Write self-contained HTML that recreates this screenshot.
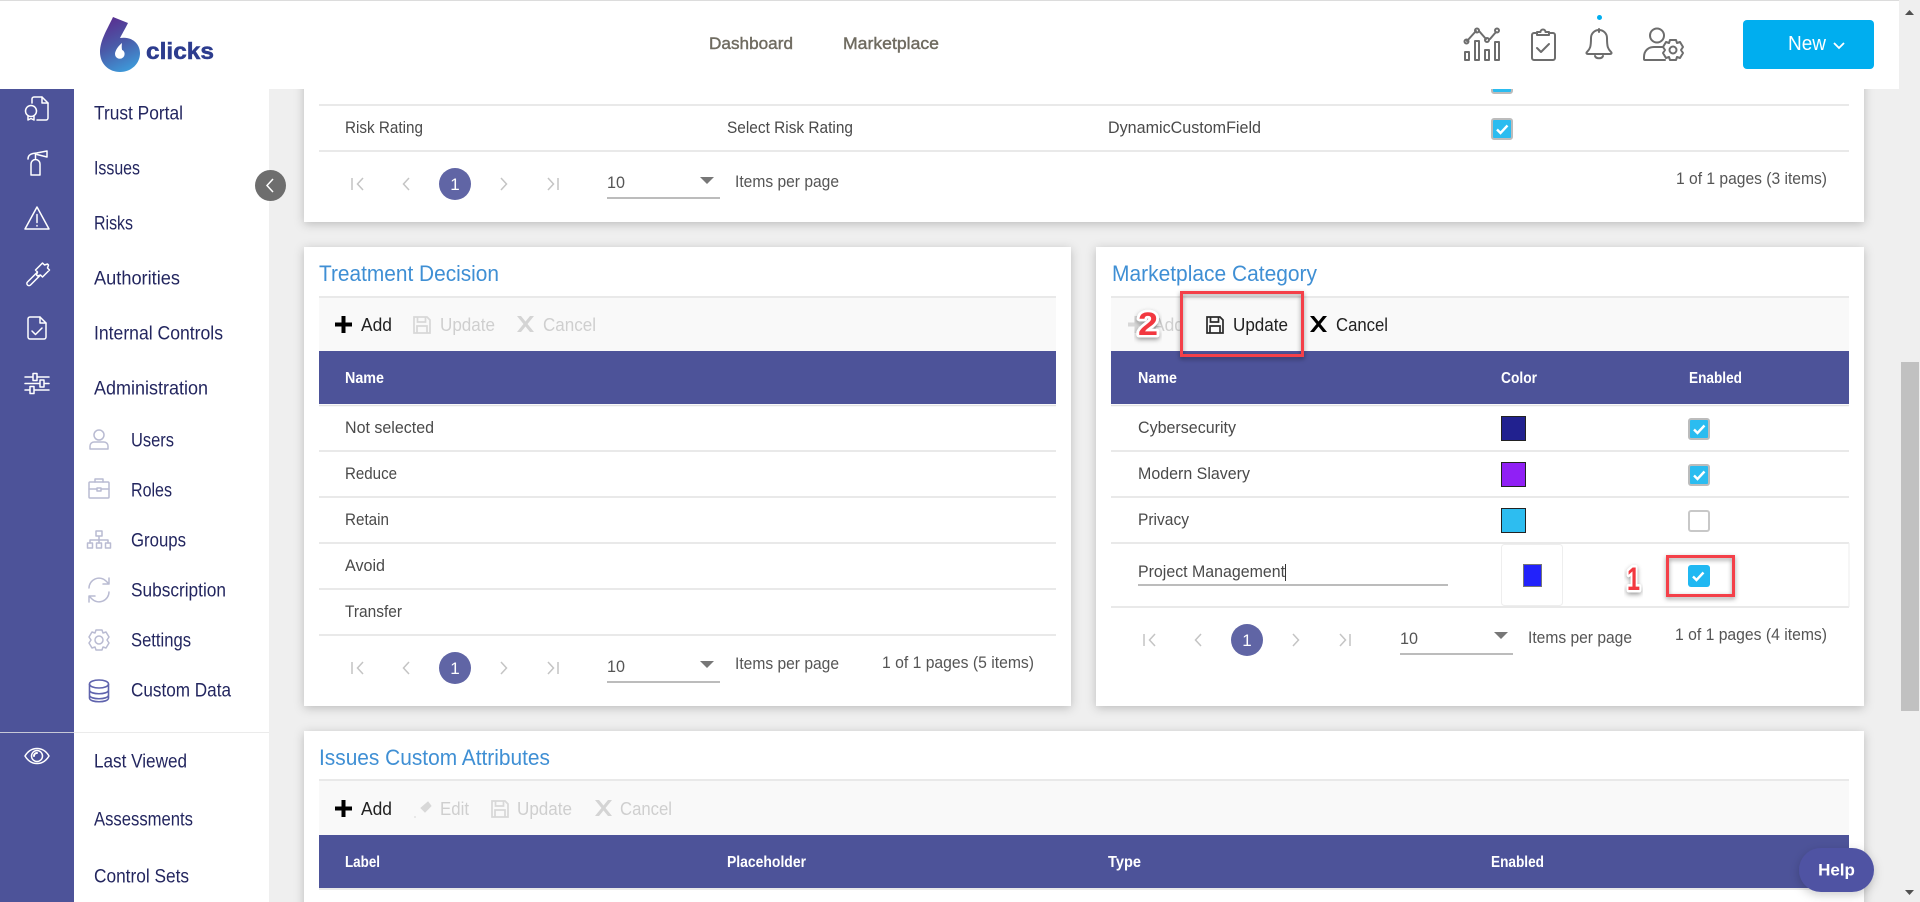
<!DOCTYPE html>
<html lang="en">
<head>
<meta charset="utf-8">
<title>6clicks</title>
<style>
html,body{margin:0;padding:0;width:1920px;height:902px;overflow:hidden;background:#efefef}
svg{display:block;font-family:"Liberation Sans",sans-serif}
.s{font-size:19px;fill:#23265f}
.r{font-size:16.5px;fill:#4a4a4a}
.t{font-size:22px;fill:#3f8fd4}
.b{font-size:18px;fill:#222}
.d{font-size:18px;fill:#cfcfcf}
.h{font-size:15.5px;font-weight:bold;fill:#fff}
.p{font-size:16.5px;fill:#555}
.w{fill:none;stroke:#fff;stroke-width:1.5;stroke-linecap:round;stroke-linejoin:round}
.g{fill:none;stroke:#b9bbd2;stroke-width:1.5;stroke-linecap:round;stroke-linejoin:round}
.k{fill:none;stroke:#6d6d6d;stroke-width:2;stroke-linecap:round;stroke-linejoin:round}
.n{fill:none;stroke:#c4c4c4;stroke-width:1.5}
.l{stroke:#e2e2e2;stroke-width:1.5}
.nm{font-size:32px;fill:#f2393f;stroke:#fff;stroke-width:5px;paint-order:stroke;stroke-linejoin:round}
</style>
</head>
<body>
<svg width="1920" height="902" viewBox="0 0 1920 902" xmlns="http://www.w3.org/2000/svg">
<defs>
<filter id="sh" x="-5%" y="-10%" width="110%" height="120%"><feDropShadow dx="0" dy="2" stdDeviation="5" flood-color="#000" flood-opacity=".22"/></filter>
<filter id="sh2" x="-20%" y="-20%" width="140%" height="140%"><feDropShadow dx="0" dy="2" stdDeviation="2.5" flood-color="#000" flood-opacity=".4"/></filter>
<filter id="sh3" x="-30%" y="-30%" width="160%" height="170%"><feDropShadow dx="0" dy="3" stdDeviation="5" flood-color="#000" flood-opacity=".2"/></filter>
<linearGradient id="lg" x1=".25" y1="0" x2=".6" y2="1"><stop offset="0" stop-color="#5a2d8f"/><stop offset=".5" stop-color="#4a5aa8"/><stop offset="1" stop-color="#3e98d8"/></linearGradient>
<g id="pg">
<path d="M-103-6v12M-92-6l-5.500 6 5.500 6" class="n"/>
<path d="M-46-6l-5.500 6 5.500 6" class="n"/>
<circle cx="0" cy="0" r="16" fill="#6065a5"/>
<path d="M46-6l5.500 6-5.500 6" class="n"/>
<path d="M103-6v12M93-6l5.500 6-5.500 6" class="n"/>
</g>
<g id="ck"><rect x="1" y="1" width="20" height="20" rx="2" fill="#2bbcf0" stroke="#bcbcbc" stroke-width="2"/><path d="M6 11.500l3.500 3.500 7-7.500" fill="none" stroke="#fff" stroke-width="2.400"/></g>
<path id="plus" d="M6.500 0h4v6.500H17v4h-6.500V17h-4v-6.500H0v-4h6.500z"/>
<path id="ex" d="M0 0h4l4.500 5.500L13 0h4l-6.500 8 6.500 8h-4l-4.500-5.500L4 16H0l6.500-8z"/>
<g id="sv" fill="none" stroke-width="1.700"><path d="M1 1h13l3 3v13H1zM4.500 1v5h8V1M4 17v-7h10v7"/></g>
</defs>

<rect width="1920" height="902" fill="#efefef"/>

<!-- cards -->
<rect x="304" y="60" width="1560" height="162" fill="#fff" filter="url(#sh)"/>
<rect x="304" y="247" width="767" height="459" fill="#fff" filter="url(#sh)"/>
<rect x="1096" y="247" width="768" height="459" fill="#fff" filter="url(#sh)"/>
<rect x="304" y="731" width="1560" height="190" fill="#fff" filter="url(#sh)"/>

<!-- top card -->
<line x1="319" x2="1849" y1="105" y2="105" class="l"/>
<line x1="319" x2="1849" y1="151" y2="151" class="l"/>
<text class="r" x="345" y="133" textLength="78" lengthAdjust="spacingAndGlyphs">Risk Rating</text>
<text class="r" x="727" y="133" textLength="126" lengthAdjust="spacingAndGlyphs">Select Risk Rating</text>
<text class="r" x="1108" y="133" textLength="153" lengthAdjust="spacingAndGlyphs">DynamicCustomField</text>
<use href="#ck" x="1491" y="72"/>
<use href="#ck" x="1491" y="118"/>
<use href="#pg" x="455" y="184"/>
<text x="455" y="190" text-anchor="middle" font-size="17" fill="#fff">1</text>
<text class="p" x="607" y="188" textLength="18" lengthAdjust="spacingAndGlyphs">10</text>
<line x1="607" x2="720" y1="198" y2="198" stroke="#a5a5a5" stroke-width="1.500"/>
<path d="M700 177h14l-7 7z" fill="#777"/>
<text class="p" x="735" y="187" textLength="104" lengthAdjust="spacingAndGlyphs">Items per page</text>
<text class="p" x="1676" y="184" textLength="151" lengthAdjust="spacingAndGlyphs">1 of 1 pages (3 items)</text>

<!-- Treatment Decision -->
<text class="t" x="319" y="281" textLength="180" lengthAdjust="spacingAndGlyphs">Treatment Decision</text>
<line x1="319" x2="1056" y1="297" y2="297" class="l"/>
<rect x="319" y="298" width="737" height="53" fill="#f9f9f9"/>
<rect x="319" y="351" width="737" height="53" fill="#4d5399"/>
<line x1="319" x2="1056" y1="405.500" y2="405.500" class="l"/>
<use href="#plus" x="335" y="316" fill="#000"/>
<text class="b" x="361" y="331" textLength="31" lengthAdjust="spacingAndGlyphs">Add</text>
<use href="#sv" x="413" y="316" stroke="#d8d8d8"/>
<text class="d" x="440" y="331" textLength="55" lengthAdjust="spacingAndGlyphs">Update</text>
<use href="#ex" x="517" y="316" fill="#d4d4d4"/>
<text class="d" x="543" y="331" textLength="53" lengthAdjust="spacingAndGlyphs">Cancel</text>
<text class="h" x="345" y="383" textLength="39" lengthAdjust="spacingAndGlyphs">Name</text>
<line x1="319" x2="1056" y1="451" y2="451" class="l"/>
<line x1="319" x2="1056" y1="497" y2="497" class="l"/>
<line x1="319" x2="1056" y1="543" y2="543" class="l"/>
<line x1="319" x2="1056" y1="589" y2="589" class="l"/>
<line x1="319" x2="1056" y1="635" y2="635" class="l"/>
<text class="r" x="345" y="433" textLength="89" lengthAdjust="spacingAndGlyphs">Not selected</text>
<text class="r" x="345" y="479" textLength="52" lengthAdjust="spacingAndGlyphs">Reduce</text>
<text class="r" x="345" y="525" textLength="44" lengthAdjust="spacingAndGlyphs">Retain</text>
<text class="r" x="345" y="571" textLength="40" lengthAdjust="spacingAndGlyphs">Avoid</text>
<text class="r" x="345" y="617" textLength="57" lengthAdjust="spacingAndGlyphs">Transfer</text>
<use href="#pg" x="455" y="668"/>
<text x="455" y="674" text-anchor="middle" font-size="17" fill="#fff">1</text>
<text class="p" x="607" y="672" textLength="18" lengthAdjust="spacingAndGlyphs">10</text>
<line x1="607" x2="720" y1="682" y2="682" stroke="#a5a5a5" stroke-width="1.500"/>
<path d="M700 661h14l-7 7z" fill="#777"/>
<text class="p" x="735" y="669" textLength="104" lengthAdjust="spacingAndGlyphs">Items per page</text>
<text class="p" x="882" y="668" textLength="152" lengthAdjust="spacingAndGlyphs">1 of 1 pages (5 items)</text>

<!-- Marketplace Category -->
<text class="t" x="1112" y="281" textLength="205" lengthAdjust="spacingAndGlyphs">Marketplace Category</text>
<line x1="1111" x2="1849" y1="297" y2="297" class="l"/>
<rect x="1111" y="298" width="738" height="53" fill="#f9f9f9"/>
<rect x="1111" y="351" width="738" height="53" fill="#4d5399"/>
<line x1="1111" x2="1849" y1="405.500" y2="405.500" class="l"/>
<use href="#plus" x="1128" y="316" fill="#d8d8d8"/>
<text class="d" x="1153" y="331" textLength="31" lengthAdjust="spacingAndGlyphs">Add</text>
<g transform="translate(1206 316)"><use href="#sv" stroke="#2a2a2a"/></g>
<text class="b" x="1233" y="331" textLength="55" lengthAdjust="spacingAndGlyphs">Update</text>
<use href="#ex" x="1310" y="316" fill="#000"/>
<text class="b" x="1336" y="331" textLength="52" lengthAdjust="spacingAndGlyphs">Cancel</text>
<text class="h" x="1138" y="383" textLength="39" lengthAdjust="spacingAndGlyphs">Name</text>
<text class="h" x="1501" y="383" textLength="36" lengthAdjust="spacingAndGlyphs">Color</text>
<text class="h" x="1689" y="383" textLength="53" lengthAdjust="spacingAndGlyphs">Enabled</text>
<line x1="1111" x2="1849" y1="451" y2="451" class="l"/>
<line x1="1111" x2="1849" y1="497" y2="497" class="l"/>
<line x1="1111" x2="1849" y1="543" y2="543" class="l"/>
<line x1="1111" x2="1849" y1="607" y2="607" class="l"/>
<line x1="1849" x2="1849" y1="543" y2="607" stroke="#eee"/>
<text class="r" x="1138" y="433" textLength="98" lengthAdjust="spacingAndGlyphs">Cybersecurity</text>
<text class="r" x="1138" y="479" textLength="112" lengthAdjust="spacingAndGlyphs">Modern Slavery</text>
<text class="r" x="1138" y="525" textLength="51" lengthAdjust="spacingAndGlyphs">Privacy</text>
<rect x="1501.500" y="416.500" width="24" height="24" fill="#21218f" stroke="#222"/>
<rect x="1501.500" y="462.500" width="24" height="24" fill="#9020f5" stroke="#222"/>
<rect x="1501.500" y="508.500" width="24" height="24" fill="#2dbdf0" stroke="#222"/>
<use href="#ck" x="1688" y="418"/>
<use href="#ck" x="1688" y="464"/>
<rect x="1689" y="511" width="20" height="20" rx="2" fill="#fff" stroke="#c8c8c8" stroke-width="2"/>
<!-- edit row -->
<text class="r" x="1138" y="577" textLength="147" lengthAdjust="spacingAndGlyphs">Project Management</text>
<line x1="1285.500" x2="1285.500" y1="564" y2="581" stroke="#333" stroke-width="1"/>
<line x1="1138" x2="1448" y1="585" y2="585" stroke="#a5a5a5" stroke-width="1.500"/>
<rect x="1501.500" y="544.500" width="61" height="61" rx="3" fill="#fff" stroke="#eee"/>
<rect x="1523.500" y="564.500" width="18" height="22" fill="#2222fb" stroke="#777"/>
<rect x="1688" y="565" width="22" height="22" rx="3" fill="#20b8f2"/>
<path d="M1693 576.500l3.500 3.500 7-7.500" fill="none" stroke="#fff" stroke-width="2.400"/>
<use href="#pg" x="1247" y="640"/>
<text x="1247" y="646" text-anchor="middle" font-size="17" fill="#fff">1</text>
<text class="p" x="1400" y="644" textLength="18" lengthAdjust="spacingAndGlyphs">10</text>
<line x1="1400" x2="1513" y1="654" y2="654" stroke="#a5a5a5" stroke-width="1.500"/>
<path d="M1494 632h14l-7 7z" fill="#777"/>
<text class="p" x="1528" y="643" textLength="104" lengthAdjust="spacingAndGlyphs">Items per page</text>
<text class="p" x="1675" y="640" textLength="152" lengthAdjust="spacingAndGlyphs">1 of 1 pages (4 items)</text>

<!-- annotations -->
<rect x="1181.500" y="292.500" width="121" height="63" fill="none" stroke="#f4404a" stroke-width="3" filter="url(#sh2)"/>
<rect x="1667.500" y="556.500" width="66" height="39" fill="none" stroke="#f4404a" stroke-width="3" filter="url(#sh2)"/>
<text class="nm" x="1138" y="335" textLength="20" lengthAdjust="spacingAndGlyphs" font-weight="bold" filter="url(#sh2)">2</text>
<text class="nm" x="1627" y="590" textLength="13" lengthAdjust="spacingAndGlyphs" font-weight="bold" filter="url(#sh2)">1</text>

<!-- Issues Custom Attributes -->
<text class="t" x="319" y="765" textLength="231" lengthAdjust="spacingAndGlyphs">Issues Custom Attributes</text>
<line x1="319" x2="1849" y1="780" y2="780" class="l"/>
<rect x="319" y="781" width="1530" height="54" fill="#f9f9f9"/>
<rect x="319" y="835" width="1530" height="53" fill="#4d5399"/>
<line x1="319" x2="1849" y1="889" y2="889" class="l"/>
<use href="#plus" x="335" y="800" fill="#000"/>
<text class="b" x="361" y="815" textLength="31" lengthAdjust="spacingAndGlyphs">Add</text>
<path d="M421 808l7-6 3 4-6 6zM414 817h2" fill="#d8d8d8" stroke="#d8d8d8"/>
<text class="d" x="440" y="815" textLength="29" lengthAdjust="spacingAndGlyphs">Edit</text>
<use href="#sv" x="491" y="800" stroke="#d8d8d8"/>
<text class="d" x="517" y="815" textLength="55" lengthAdjust="spacingAndGlyphs">Update</text>
<use href="#ex" x="595" y="800" fill="#d4d4d4"/>
<text class="d" x="620" y="815" textLength="52" lengthAdjust="spacingAndGlyphs">Cancel</text>
<text class="h" x="345" y="867" textLength="35" lengthAdjust="spacingAndGlyphs">Label</text>
<text class="h" x="727" y="867" textLength="79" lengthAdjust="spacingAndGlyphs">Placeholder</text>
<text class="h" x="1108" y="867" textLength="33" lengthAdjust="spacingAndGlyphs">Type</text>
<text class="h" x="1491" y="867" textLength="53" lengthAdjust="spacingAndGlyphs">Enabled</text>

<!-- scrollbar -->
<rect x="1901" y="362" width="18" height="349" fill="#c1c1c1"/>
<path d="M1905 15h9l-4.500-5z" fill="#505050"/>
<path d="M1905 890h9l-4.500 5z" fill="#505050"/>

<!-- help -->
<rect x="1799" y="848" width="75" height="44" rx="22" fill="#4f52a3" filter="url(#sh3)"/>
<text x="1836.500" y="875.500" text-anchor="middle" font-size="17" font-weight="bold" fill="#fff">Help</text>

<!-- sidebar -->
<rect x="0" y="89" width="74" height="813" fill="#4d5399"/>
<rect x="74" y="89" width="195" height="813" fill="#fff"/>
<line x1="0" x2="269" y1="732.500" y2="732.500" stroke="#e6e6e6" stroke-opacity=".8"/>
<circle cx="270.500" cy="185.500" r="15.500" fill="#6e6e6e"/>
<path d="M273 179l-6 6.500 6 6.500" fill="none" stroke="#fff" stroke-width="1.500"/>

<text class="s" x="94" y="119.500" textLength="89" lengthAdjust="spacingAndGlyphs">Trust Portal</text>
<text class="s" x="94" y="174.500" textLength="46" lengthAdjust="spacingAndGlyphs">Issues</text>
<text class="s" x="94" y="229.500" textLength="39" lengthAdjust="spacingAndGlyphs">Risks</text>
<text class="s" x="94" y="284.500" textLength="86" lengthAdjust="spacingAndGlyphs">Authorities</text>
<text class="s" x="94" y="339.500" textLength="129" lengthAdjust="spacingAndGlyphs">Internal Controls</text>
<text class="s" x="94" y="394.500" textLength="114" lengthAdjust="spacingAndGlyphs">Administration</text>
<text class="s" x="131" y="446.500" textLength="43" lengthAdjust="spacingAndGlyphs">Users</text>
<text class="s" x="131" y="496.500" textLength="41" lengthAdjust="spacingAndGlyphs">Roles</text>
<text class="s" x="131" y="546.500" textLength="55" lengthAdjust="spacingAndGlyphs">Groups</text>
<text class="s" x="131" y="596.500" textLength="95" lengthAdjust="spacingAndGlyphs">Subscription</text>
<text class="s" x="131" y="646.500" textLength="60" lengthAdjust="spacingAndGlyphs">Settings</text>
<text class="s" x="131" y="696.500" textLength="100" lengthAdjust="spacingAndGlyphs">Custom Data</text>
<text class="s" x="94" y="767.500" textLength="93" lengthAdjust="spacingAndGlyphs">Last Viewed</text>
<text class="s" x="94" y="825.500" textLength="99" lengthAdjust="spacingAndGlyphs">Assessments</text>
<text class="s" x="94" y="882.500" textLength="95" lengthAdjust="spacingAndGlyphs">Control Sets</text>

<!-- purple rail icons -->
<g class="w">
<!-- certificate doc -->
<path d="M32 103v-4a2 2 0 0 1 2-2h8l6 6v15a2 2 0 0 1-2 2H37"/><path d="M42 97v6h6"/><circle cx="31" cy="111" r="5.500"/><path d="M28 116v4l3-1.500 3 1.500v-4"/>
<!-- extinguisher -->
<path d="M31 175v-11a4.500 4.500 0 0 1 9 0v11zM35.500 159.500V154M28 159c0-3 2-5 5-5.500l3.500-.5 10.500-2v6l-10-2.500"/>
<!-- warning -->
<path d="M37 207l12 22H25zM37 214.500v8M37 225.500v.5"/>
<!-- gavel -->
<path d="M35.500 270l7-7 2 2 3-1 1 1-1 3 2 2-7 7-2-2-3 1-1-1 1-3z"/><path d="M37 272.500l-9.500 9.500a2 2 0 0 0 3 3l9.500-9.500"/>
<!-- doc check -->
<path d="M30 317h10l6 6v14a2 2 0 0 1-2 2H30a2 2 0 0 1-2-2v-18a2 2 0 0 1 2-2z"/><path d="M40 317v6h6M32 331l3.500 3.500 6.500-6.500"/>
<!-- sliders -->
<path d="M25 377h24M25 383.500h24M25 390h24"/><rect x="33" y="373.500" width="4" height="7" fill="#4d5399"/><rect x="40" y="380" width="4" height="7" fill="#4d5399"/><rect x="30" y="386.500" width="4" height="7" fill="#4d5399"/>
<!-- eye -->
<path d="M25 756c6-10 18-10 24 0-6 10-18 10-24 0z"/><circle cx="37" cy="756" r="5.500"/><path d="M37 753a3 3 0 0 0-3 3" stroke-width="2"/>
</g>

<!-- submenu icons -->
<g class="g">
<circle cx="99" cy="435" r="5"/><path d="M90 449v-3a4 4 0 0 1 4-4h10a4 4 0 0 1 4 4v3z"/>
<rect x="89" y="482" width="20" height="16" rx="1"/><path d="M95 482v-3h8v3M89 489h8M101 489h8M97 488h4v3h-4z"/>
<path d="M96 531h6v5h-6zM99 536v4M90 540h18M90 540v3M99 540v3M108 540v3"/><rect x="87.500" y="543" width="5" height="5"/><rect x="96.500" y="543" width="5" height="5"/><rect x="105.500" y="543" width="5" height="5"/>
<path d="M89 588a10 10 0 0 1 17-7l3 3M109 578v6h-6M109 592a10 10 0 0 1-17 7l-3-3M89 602v-6h6"/>
<circle cx="99" cy="640" r="4"/><path d="M96 630h6l1 3 3-1 3 5-2 3 2 3-3 5-3-1-1 3h-6l-1-3-3 1-3-5 2-3-2-3 3-5 3 1z"/>
</g>
<g fill="none" stroke="#5f63ad" stroke-width="1.600">
<ellipse cx="99" cy="684" rx="9.500" ry="4"/><path d="M89.500 684v14c0 5 19 5 19 0v-14M89.500 690c0 5 19 5 19 0M89.500 695c0 5 19 5 19 0"/>
</g>

<!-- top bar -->
<rect x="0" y="0" width="1899" height="89" fill="#fff"/>
<rect x="0" y="0" width="1899" height="1" fill="#dcdcdc"/>
<path fill="url(#lg)" fill-rule="evenodd" d="M113 17l15 6c-3 6-6 11-8 15 12-2 20 6 20 15 0 11-9 19-20 19s-20-8-20-20c0-12 8-24 13-35zM122 43c-4 3-7 8-7 11a4.800 4.800 0 0 0 9.600 0c0-2-1-3.500-2.500-4-.5-2-.5-4.500-.1-7z"/>
<text x="146" y="59" font-size="23" font-weight="bold" fill="#2c3c8e" stroke="#2c3c8e" stroke-width=".5" textLength="68" lengthAdjust="spacingAndGlyphs">clicks</text>

<text x="709" y="49" font-size="17" fill="#6f6b60" stroke="#6f6b60" stroke-width=".4" textLength="84" lengthAdjust="spacingAndGlyphs">Dashboard</text>
<text x="843" y="49" font-size="17" fill="#6f6b60" stroke="#6f6b60" stroke-width=".4" textLength="96" lengthAdjust="spacingAndGlyphs">Marketplace</text>

<g class="k">
<!-- chart -->
<path d="M1467 41l9-10M1479 31l7 8M1490 39l6-7"/>
<circle cx="1466.500" cy="41.500" r="2"/><circle cx="1477" cy="30.500" r="2"/><circle cx="1487" cy="40" r="2"/><circle cx="1497" cy="30.500" r="2"/>
<rect x="1465" y="52" width="4" height="8"/><rect x="1475" y="41" width="4" height="19"/><rect x="1485" y="50" width="4" height="10"/><rect x="1495" y="42" width="4" height="18"/>
<!-- clipboard -->
<path d="M1537 33h-3a2 2 0 0 0-2 2v23a2 2 0 0 0 2 2h19a2 2 0 0 0 2-2V35a2 2 0 0 0-2-2h-3"/>
<path d="M1537 35h12v-3h-3.500a2.500 2.500 0 0 0-5 0H1537z"/><path d="M1537 48l4 4 8-8"/>
<!-- bell -->
<path d="M1599 29v3M1591 38a8 8 0 0 1 16 0c0 9 1 11 4 14 1 1 .5 2-1 2h-22c-1.500 0-2-1-1-2 3-3 4-5 4-14zM1595 56c1 3 7 3 8 0"/>
<!-- user gear -->
<circle cx="1657" cy="35.500" r="7"/><path d="M1663 47h-9c-6 0-10 4-10 10v2a1 1 0 0 0 1 1h20"/>
<circle cx="1673" cy="50" r="3.500"/><path d="M1670 40h6l1 3 3-1 3 5-2 3 2 3-3 5-3-1-1 3h-6l-1-3-3 1-3-5 2-3-2-3 3-5 3 1z"/>
</g>
<circle cx="1599.500" cy="17.500" r="2.500" fill="#00aeef"/>

<rect x="1743" y="20" width="131" height="49" rx="4" fill="#00aeef"/>
<text x="1788" y="50" font-size="20" fill="#fff" textLength="38" lengthAdjust="spacingAndGlyphs">New</text>
<path d="M1834 43l5 5 5-5" fill="none" stroke="#fff" stroke-width="1.800"/>
</svg>
</body>
</html>
